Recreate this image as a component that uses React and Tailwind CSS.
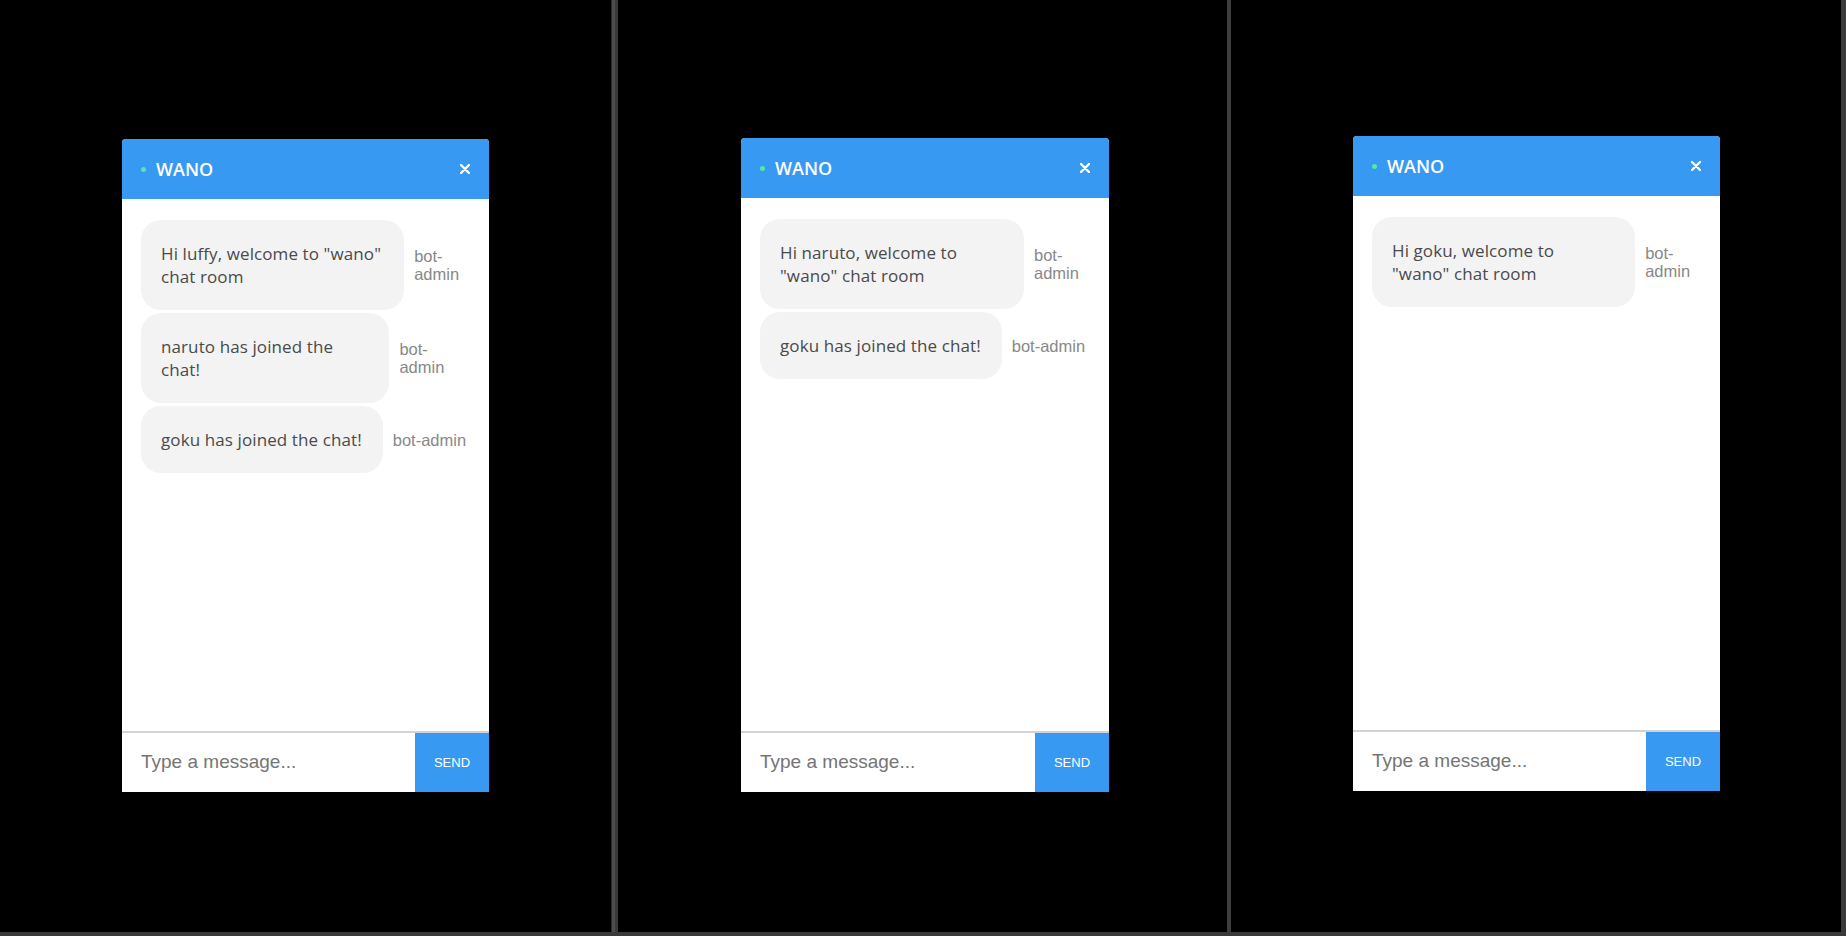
import { useState } from 'react';

const rooms = [
  {
    id: 1,
    width: 'w-[611px]',
    offset: 'pt-[139px] pl-[122px]',
    cardWidth: 'w-[367px]',
    listHeight: 'h-[532px]',
    messages: ['Hi luffy, welcome to "wano" chat room', 'naruto has joined the chat!', 'goku has joined the chat!'],
  },
  {
    id: 2,
    width: 'w-[609px]',
    offset: 'pt-[138px] pl-[123px]',
    cardWidth: 'w-[368px]',
    listHeight: 'h-[533px]',
    messages: ['Hi naruto, welcome to "wano" chat room', 'goku has joined the chat!'],
  },
  {
    id: 3,
    width: 'w-[610px]',
    offset: 'pt-[136px] pl-[122px]',
    cardWidth: 'w-[367px]',
    listHeight: 'h-[534px]',
    messages: ['Hi goku, welcome to "wano" chat room'],
  },
];

function Message({ text }) {
  return (
    <div className="flex items-center">
      <div className="max-w-[80%] bg-[#f3f3f3] rounded-[20px] pl-[20px] pr-[21px] py-[22px] text-[17px] leading-[23px] tracking-[0.1px] text-[#4a4a4a] font-['Open_Sans',sans-serif]">
        {text}
      </div>
      <div className="ml-[10px] text-[16.5px] leading-[18px] text-[#888888] font-['Liberation_Sans',Arial,sans-serif]">
        bot-admin
      </div>
    </div>
  );
}

function ChatBox({ room }) {
  const [draft, setDraft] = useState('');
  return (
    <div className={`${room.cardWidth} bg-white rounded-[4px] flex flex-col`}>
      <div className="flex items-center h-[60px] px-[19px] bg-[#3799f2] rounded-t-[4px]">
        <span className="w-[5px] h-[5px] rounded-full bg-[#52e8a8] mr-[10px]" />
        <span className="text-white text-[18px] font-semibold font-['Open_Sans',sans-serif]">WANO</span>
        <button className="ml-auto">
          <svg width="10" height="10" viewBox="0 0 10 10">
            <path d="M1 1L9 9M9 1L1 9" stroke="white" strokeWidth="2.4" strokeLinecap="round" />
          </svg>
        </button>
      </div>
      <div className={`${room.listHeight} flex flex-col gap-[3px] pt-[21px] px-[19px]`}>
        {room.messages.map((m, i) => <Message key={i} text={m} />)}
      </div>
      <div className="flex h-[61px] border-t-2 border-[#d3d3d3]">
        <input
          value={draft}
          onChange={e => setDraft(e.target.value)}
          placeholder="Type a message..."
          className="flex-1 min-w-0 pl-[19px] bg-white text-[19px] text-[#333] placeholder:text-[#757575] outline-none font-['Liberation_Sans',Arial,sans-serif]"
        />
        <button className="w-[74px] bg-[#3799f2] text-white text-[13px] font-['Liberation_Sans',Arial,sans-serif]">
          SEND
        </button>
      </div>
    </div>
  );
}

export default function App() {
  return (
    <div className="w-[1846px] h-[936px] bg-black flex flex-col overflow-hidden">
      <div className="flex h-[932px]">
        <div className={`${rooms[0].width} ${rooms[0].offset} h-full`}>
          <ChatBox room={rooms[0]} />
        </div>
        {/* window divider */}
        <div className="flex h-full">
          <div className="w-[1px] bg-[#2a2a2a]" />
          <div className="w-[3px] bg-[#4d4d4d]" />
          <div className="w-[3px] bg-[#3a3a3a]" />
        </div>
        <div className={`${rooms[1].width} ${rooms[1].offset} h-full`}>
          <ChatBox room={rooms[1]} />
        </div>
        <div className="w-[4px] h-full bg-[#3d3d3d]" />
        <div className={`${rooms[2].width} ${rooms[2].offset} h-full`}>
          <ChatBox room={rooms[2]} />
        </div>
        <div className="w-[5px] h-full bg-[#3a3a3a]" />
      </div>
      <div className="h-[4px] bg-[#3a3a3a]" />
    </div>
  );
}
